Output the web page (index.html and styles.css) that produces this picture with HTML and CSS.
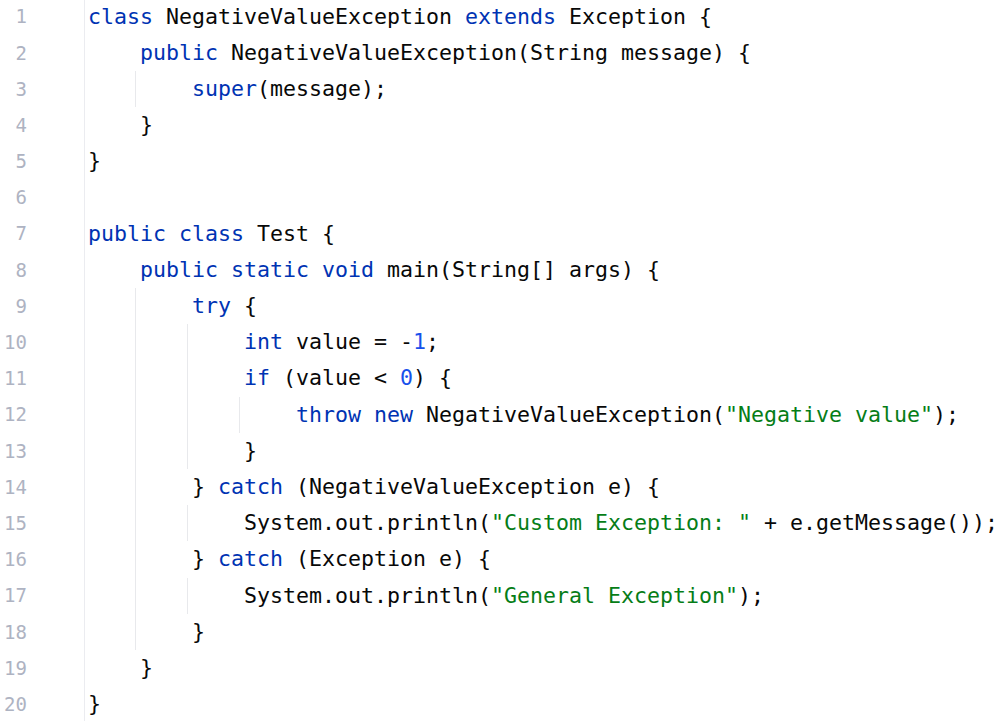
FILE: index.html
```html
<!DOCTYPE html>
<html>
<head>
<meta charset="utf-8">
<link rel="stylesheet" href="styles.css">
</head>
<body>
<div class="editor">
  <div class="gutter">
    <div class="ln">1</div><div class="ln">2</div><div class="ln">3</div><div class="ln">4</div><div class="ln">5</div>
    <div class="ln">6</div><div class="ln">7</div><div class="ln">8</div><div class="ln">9</div><div class="ln">10</div>
    <div class="ln">11</div><div class="ln">12</div><div class="ln">13</div><div class="ln">14</div><div class="ln">15</div>
    <div class="ln">16</div><div class="ln">17</div><div class="ln">18</div><div class="ln">19</div><div class="ln">20</div>
  </div>
  <div class="code">
    <div class="line"><span class="kw">class</span> NegativeValueException <span class="kw">extends</span> Exception {</div>
    <div class="ind">
      <div class="line"><span class="kw">public</span> NegativeValueException(String message) {</div>
      <div class="g">
        <div class="line"><span class="kw">super</span>(message);</div>
      </div>
      <div class="line">}</div>
    </div>
    <div class="line">}</div>
    <div class="line"> </div>
    <div class="line"><span class="kw">public class</span> Test {</div>
    <div class="ind">
      <div class="line"><span class="kw">public static void</span> main(String[] args) {</div>
      <div class="g">
        <div class="line"><span class="kw">try</span> {</div>
        <div class="g">
          <div class="line"><span class="kw">int</span> value = -<span class="num">1</span>;</div>
          <div class="line"><span class="kw">if</span> (value &lt; <span class="num">0</span>) {</div>
          <div class="g">
            <div class="line"><span class="kw">throw new</span> NegativeValueException(<span class="str">"Negative value"</span>);</div>
          </div>
          <div class="line">}</div>
        </div>
        <div class="line">} <span class="kw">catch</span> (NegativeValueException e) {</div>
        <div class="g">
          <div class="line">System.out.println(<span class="str">"Custom Exception: "</span> + e.getMessage());</div>
        </div>
        <div class="line">} <span class="kw">catch</span> (Exception e) {</div>
        <div class="g">
          <div class="line">System.out.println(<span class="str">"General Exception"</span>);</div>
        </div>
        <div class="line">}</div>
      </div>
      <div class="line">}</div>
    </div>
    <div class="line">}</div>
  </div>
</div>
</body>
</html>
```
FILE: styles.css
```css
html, body {
  margin: 0;
  padding: 0;
  background: #ffffff;
}
.editor {
  display: flex;
  align-items: flex-start;
  height: 721px;
  overflow: hidden;
  font-family: "DejaVu Sans Mono", monospace;
  color: #080808;
}
.gutter {
  width: 84px;
  height: 740px;
  border-right: 1px solid #ebecf0;
  box-sizing: content-box;
  margin-top: -1.7px;
  flex: none;
}
.ln {
  height: 36.2px;
  line-height: 36.2px;
  font-size: 19px;
  color: #aeb3c2;
  text-align: right;
  padding-right: 57px;
}
.code {
  padding-left: 3px;
  margin-top: -1.5px;
  font-size: 21.6px;
}
.line {
  height: 36.2px;
  line-height: 36.2px;
  white-space: pre;
}
.ind {
  padding-left: 52px;
}
.g {
  margin-left: -5px;
  border-left: 1px solid #e8e9ec;
  padding-left: 56px;
}
.kw { color: #0033b3; }
.num { color: #1750eb; }
.str { color: #067d17; }
```
